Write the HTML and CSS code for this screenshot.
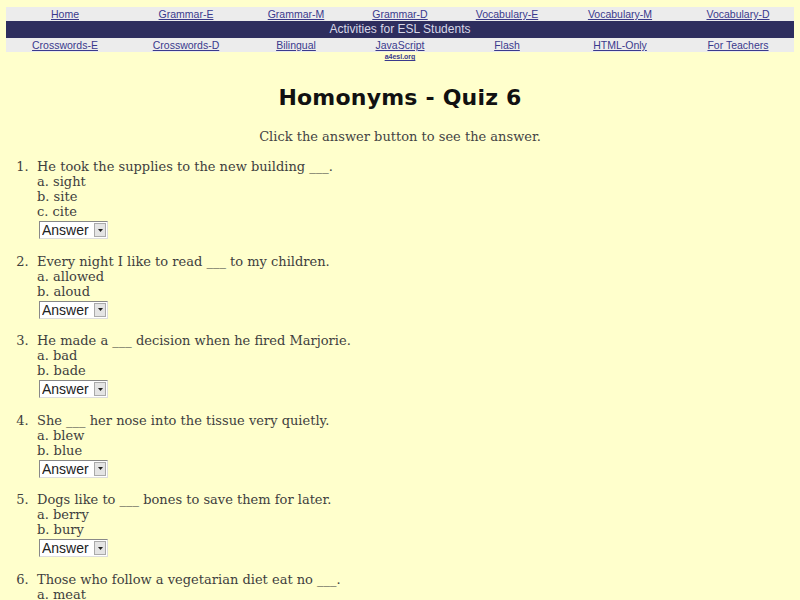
FILE: index.html
```html
<!DOCTYPE html>
<html>
<head>
<meta charset="utf-8">
<title>Homonyms - Quiz 6</title>
<link rel="stylesheet" href="styles.css">
</head>
<body>
<div class="nav">
  <div class="row links">
    <a href="#">Home</a><a href="#">Grammar-E</a><a href="#">Grammar-M</a><a href="#">Grammar-D</a><a href="#">Vocabulary-E</a><a href="#">Vocabulary-M</a><a href="#">Vocabulary-D</a>
  </div>
  <div class="banner">Activities for ESL Students</div>
  <div class="row links">
    <a href="#">Crosswords-E</a><a href="#">Crosswords-D</a><a href="#">Bilingual</a><a href="#">JavaScript</a><a href="#">Flash</a><a href="#">HTML-Only</a><a href="#">For Teachers</a>
  </div>
  <div class="row sub">
    <span></span><span></span><span></span><a href="#" class="site">a4esl.org</a><span></span><span></span><span></span>
  </div>
</div>

<h1 class="title">Homonyms - Quiz 6</h1>
<p class="intro">Click the answer button to see the answer.</p>

<ol class="quiz">
  <li>He took the supplies to the new building ___.
    <div class="opt">a. sight</div><div class="opt">b. site</div><div class="opt">c. cite</div>
    <div class="ans"><select class="sel"><option>Answer</option></select><span class="arrow"><svg width="5" height="3" viewBox="0 0 5 3"><path d="M0 0H5L2.5 3Z" fill="#222"/></svg></span></div>
  </li>
  <li>Every night I like to read ___ to my children.
    <div class="opt">a. allowed</div><div class="opt">b. aloud</div>
    <div class="ans"><select class="sel"><option>Answer</option></select><span class="arrow"><svg width="5" height="3" viewBox="0 0 5 3"><path d="M0 0H5L2.5 3Z" fill="#222"/></svg></span></div>
  </li>
  <li>He made a ___ decision when he fired Marjorie.
    <div class="opt">a. bad</div><div class="opt">b. bade</div>
    <div class="ans"><select class="sel"><option>Answer</option></select><span class="arrow"><svg width="5" height="3" viewBox="0 0 5 3"><path d="M0 0H5L2.5 3Z" fill="#222"/></svg></span></div>
  </li>
  <li>She ___ her nose into the tissue very quietly.
    <div class="opt">a. blew</div><div class="opt">b. blue</div>
    <div class="ans"><select class="sel"><option>Answer</option></select><span class="arrow"><svg width="5" height="3" viewBox="0 0 5 3"><path d="M0 0H5L2.5 3Z" fill="#222"/></svg></span></div>
  </li>
  <li>Dogs like to ___ bones to save them for later.
    <div class="opt">a. berry</div><div class="opt">b. bury</div>
    <div class="ans"><select class="sel"><option>Answer</option></select><span class="arrow"><svg width="5" height="3" viewBox="0 0 5 3"><path d="M0 0H5L2.5 3Z" fill="#222"/></svg></span></div>
  </li>
  <li>Those who follow a vegetarian diet eat no ___.
    <div class="opt">a. meat</div><div class="opt">b. meet</div>
    <div class="ans"><select class="sel"><option>Answer</option></select><span class="arrow"><svg width="5" height="3" viewBox="0 0 5 3"><path d="M0 0H5L2.5 3Z" fill="#222"/></svg></span></div>
  </li>
</ol>
</body>
</html>
```

FILE: styles.css
```css
html, body {
  margin: 0;
  padding: 0;
  background: #ffffcc;
}
body {
  font-family: "DejaVu Serif", serif;
  color: #3e3e3e;
  overflow: hidden;
}
.nav {
  margin: 7px 6px 0 6px;
  font-family: "Liberation Sans", Arial, sans-serif;
}
.row {
  display: grid;
  grid-template-columns: 118px 124px 96px 112px 102px 124px 112px;
}
.links {
  background: #ececec;
  height: 14px;
  line-height: 14px;
  font-size: 10.5px;
}
.links a {
  text-align: center;
  color: #3a3a8c;
  text-decoration: underline;
}
.banner {
  background: #2e2e5e;
  color: #d8d8e8;
  height: 17px;
  line-height: 17px;
  font-size: 12px;
  text-align: center;
}
.sub {
  height: 10px;
  line-height: 10px;
}
.site {
  font-size: 7px;
  font-weight: bold;
  text-align: center;
  color: #3a3a8c;
  text-decoration: underline;
}
.title {
  margin: 21px 0 0 0;
  text-align: center;
  font-family: "DejaVu Sans", sans-serif;
  font-weight: bold;
  font-size: 22px;
  line-height: 30px;
  color: #111;
  letter-spacing: 0.2px;
}
.intro {
  margin: 16px 0 0 0;
  text-align: center;
  font-size: 13px;
  line-height: 15px;
  color: #444;
}
.quiz {
  margin: 15px 0 0 0;
  padding-left: 37px;
  font-size: 13px;
  line-height: 15px;
}
.quiz li {
  margin-bottom: 14.5px;
}
.quiz li::marker {
  content: counter(list-item) ".\00a0\00a0";
}
.ans {
  display: inline-flex;
  margin: 2px 0 0 2px;
  height: 18px;
  border: 1px solid #888;
  border-right-color: #ddd;
  border-bottom-color: #ddd;
  background: #fff;
  box-sizing: border-box;
}
.sel {
  appearance: none;
  -webkit-appearance: none;
  border: none;
  background: #fff;
  font-family: "Liberation Sans", Arial, sans-serif;
  font-size: 14px;
  color: #222;
  padding: 0 5px 0 2px;
  margin: 0;
  height: 16px;
  line-height: 16px;
  outline: none;
}
.arrow {
  width: 12px;
  height: 14px;
  margin: 1px 1px 1px 0;
  background: #e4e4e4;
  border: 1px solid #aaa;
  box-sizing: border-box;
  display: flex;
  align-items: center;
  justify-content: center;
}
```
